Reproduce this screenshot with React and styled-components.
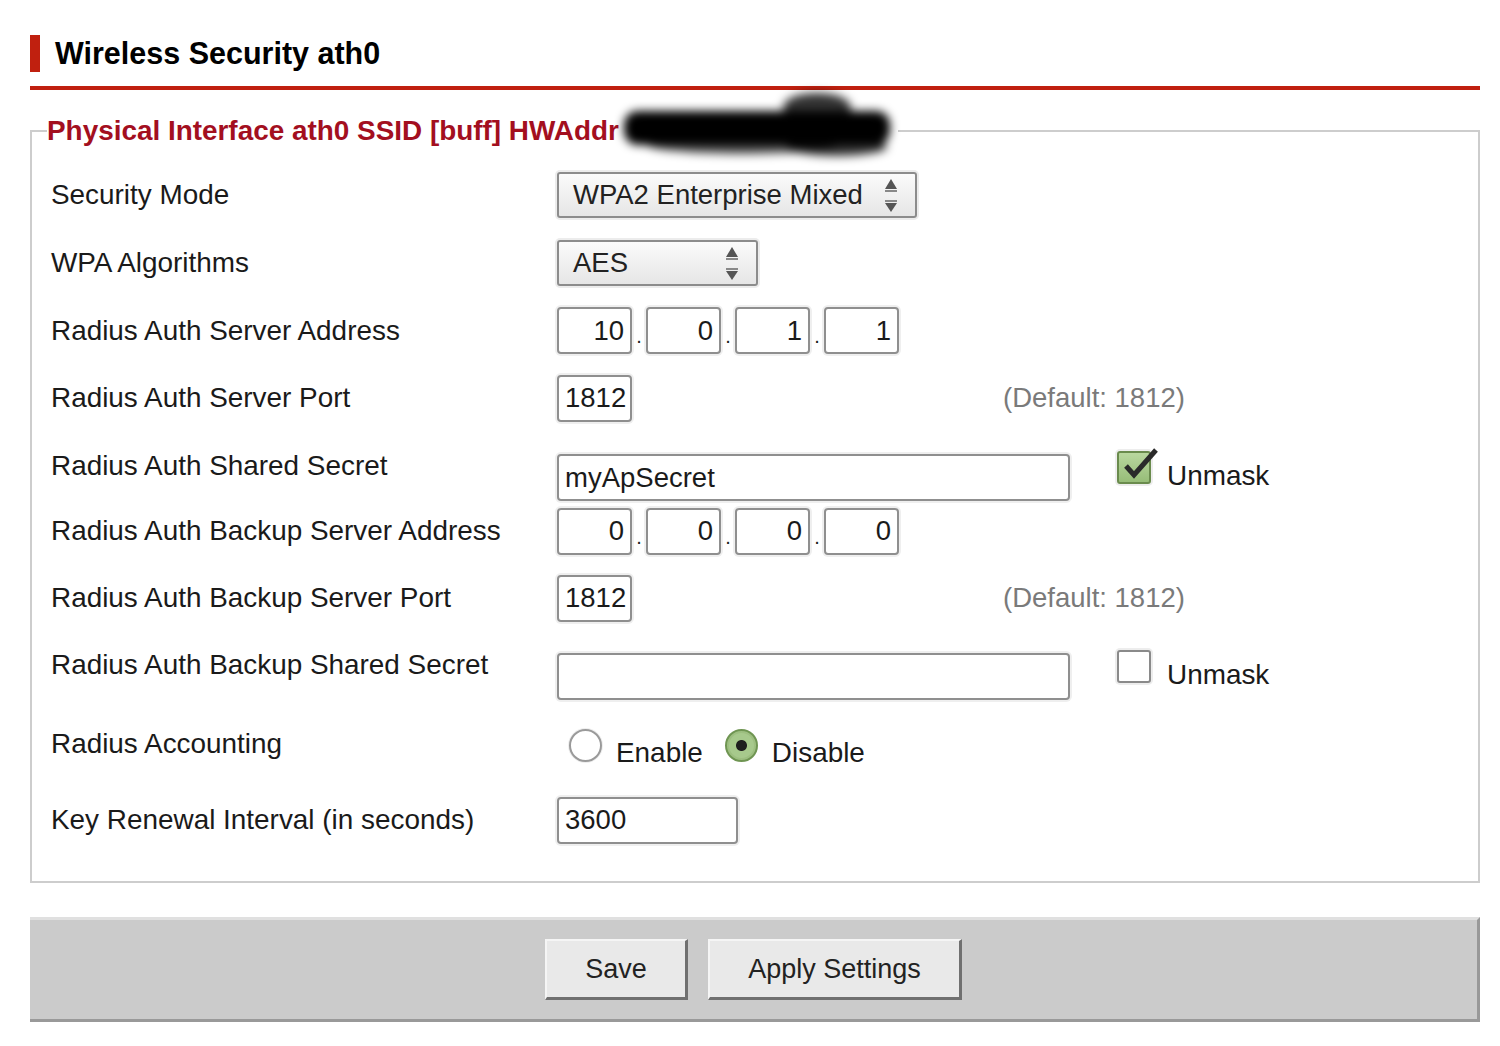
import React from "react";
import styled, { createGlobalStyle } from "styled-components";

const GlobalStyle = createGlobalStyle`
  body {
    margin: 0;
    background: #fff;
    font-family: "Liberation Sans", Arial, sans-serif;
    color: #1a1a1a;
  }
`;

const Page = styled.div`
  width: 1450px;
  padding: 35px 0 0 30px;
`;

const Header = styled.div`
  padding-bottom: 14px;
  border-bottom: 4px solid #c0200f;
`;

const Title = styled.h1`
  margin: 0;
  height: 37px;
  display: flex;
  align-items: center;
  border-left: 10px solid #c0200f;
  padding-left: 15px;
  font-size: 30.5px;
  font-weight: bold;
  color: #000;
`;

const Fieldset = styled.fieldset`
  margin: 25px 0 0;
  padding: 14px 0 27px 19px;
  border: 2px solid #cdcdcd;
  min-width: 0;
`;

const Legend = styled.legend`
  margin-left: -4px;
  padding: 0;
  height: 32px;
  line-height: 32px;
  font-size: 27.9px;
  font-weight: bold;
  color: #a30f1f;
  white-space: nowrap;
`;

const Redaction = styled.svg`
  display: inline-block;
  vertical-align: middle;
  width: 272px;
  height: 32px;
  margin-left: 3px;
  margin-right: 4px;
  overflow: visible;
`;

const Row = styled.div`
  display: flex;
  align-items: ${(p) => (p.$top ? "flex-start" : "center")};
  height: ${(p) => p.$h}px;
  padding-top: ${(p) => p.$pt || 0}px;
  box-sizing: border-box;
`;

const Label = styled.div`
  width: 506px;
  flex: none;
  font-size: 27.9px;
  line-height: 32px;
  margin-bottom: ${(p) => p.$lift || 0}px;
`;

const Control = styled.div`
  display: flex;
  align-items: ${(p) => (p.$top ? "flex-start" : "center")};
  margin-top: ${(p) => p.$mt || 0}px;
`;

const Select = styled.div`
  box-sizing: border-box;
  width: ${(p) => p.$w}px;
  height: 46px;
  display: flex;
  align-items: center;
  justify-content: space-between;
  padding: 0 16px 0 14px;
  border: 2px solid #8c8c8c;
  border-radius: 3px;
  background: linear-gradient(#fbfbfb, #e6e6e6);
  box-shadow: 0 0 0 2px #ececec;
  font-size: 27.5px;
  color: #222;
`;

const Input = styled.div`
  box-sizing: border-box;
  width: ${(p) => p.$w}px;
  height: 47px;
  display: flex;
  align-items: center;
  justify-content: ${(p) => (p.$right ? "flex-end" : "flex-start")};
  padding: 0 6px;
  border: 2px solid #8f8f8f;
  border-radius: 4px;
  background: #fff;
  box-shadow: 0 0 0 2px #efefef;
  font-size: 27.5px;
  color: #1a1a1a;
`;

const Dot = styled.span`
  width: 14px;
  text-align: center;
  font-size: 20px;
  align-self: flex-end;
  padding-bottom: 6px;
`;

const Hint = styled.span`
  margin-left: 371px;
  font-size: 27.5px;
  color: #7a7a7a;
`;

const CheckWrap = styled.div`
  display: flex;
  align-items: flex-start;
  margin-left: 47px;
  margin-top: -3px;
`;

const Box = styled.span`
  display: inline-block;
  position: relative;
  box-sizing: border-box;
  width: 34px;
  height: 33px;
  border: 2px solid ${(p) => (p.$checked ? "#6a8b4d" : "#8a8a8a")};
  border-radius: 3px;
  background: ${(p) =>
    p.$checked ? "linear-gradient(#b9d79f, #97bd78)" : "#fff"};
  box-shadow: 0 0 0 2px #ededed;
`;

const CheckMark = styled.svg`
  position: absolute;
  left: 2px;
  top: -6px;
  width: 38px;
  height: 36px;
  overflow: visible;
`;

const CheckText = styled.span`
  margin-left: 16px;
  margin-top: 9px;
  font-size: 27.9px;
  line-height: 32px;
`;

const RadioGroup = styled.div`
  display: flex;
  align-items: center;
  margin-left: 12px;
`;

const Radio = styled.span`
  display: inline-block;
  box-sizing: border-box;
  width: 33px;
  height: 33px;
  border-radius: 50%;
  margin-top: -8px;
  border: 2px solid ${(p) => (p.$checked ? "#6f9552" : "#9a9a9a")};
  background: ${(p) =>
    p.$checked
      ? "radial-gradient(circle, #1e1e1e 0 5px, #a7c98c 6px 100%)"
      : "#fff"};
  box-shadow: ${(p) =>
    p.$checked ? "inset 0 0 0 2px #9dbf80" : "0 0 0 1px #eeeeee"};
`;

const RadioText = styled.span`
  margin: 8px 22px 0 14px;
  font-size: 27.9px;
`;

const Footer = styled.div`
  margin-top: 34px;
  box-sizing: border-box;
  height: 105px;
  display: flex;
  justify-content: center;
  align-items: center;
  gap: 20px;
  background: #cbcbcb;
  border-top: 3px solid #e0e0e0;
  border-right: 3px solid #999;
  border-bottom: 3px solid #999;
`;

const Button = styled.button`
  box-sizing: border-box;
  width: ${(p) => p.$w}px;
  height: 61px;
  background: #e9e9e9;
  border-style: solid;
  border-width: 2px 3px 3px 2px;
  border-color: #f5f5f5 #707070 #707070 #f5f5f5;
  font-family: "Liberation Sans", Arial, sans-serif;
  font-size: 27px;
  color: #222;
  padding: 0;
`;

const Spinner = () => (
  <svg width="16" height="38" viewBox="0 0 16 38">
    <polygon points="8,3 14,13 2,13" fill="#555" />
    <rect x="2" y="14" width="12" height="2" fill="#888" />
    <rect x="2" y="24" width="12" height="2" fill="#888" />
    <polygon points="2,27 14,27 8,36" fill="#555" />
  </svg>
);

const IpField = ({ parts }) => (
  <Control>
    {parts.map((v, i) => (
      <React.Fragment key={i}>
        {i > 0 && <Dot>.</Dot>}
        <Input $w={75} $right>
          {v}
        </Input>
      </React.Fragment>
    ))}
  </Control>
);

const Check = ({ checked }) => (
  <Box $checked={checked}>
    {checked && (
      <CheckMark viewBox="0 0 38 36">
        <path
          d="M5 19 L13 28 L35 3"
          fill="none"
          stroke="#2a2a2a"
          strokeWidth="5"
          strokeLinejoin="miter"
        />
      </CheckMark>
    )}
  </Box>
);

export default function App() {
  return (
    <>
      <GlobalStyle />
      <Page>
        <Header>
          <Title>Wireless Security ath0</Title>
        </Header>

        <Fieldset>
          <Legend>
            Physical Interface ath0 SSID [buff] HWAddr
            <Redaction viewBox="0 0 272 32">
              <defs>
                <filter id="smudge" x="-20%" y="-80%" width="140%" height="260%">
                  <feGaussianBlur stdDeviation="5" />
                </filter>
              </defs>
              <g filter="url(#smudge)" fill="#000">
                <rect x="2" y="-6" width="266" height="34" rx="14" />
                <ellipse cx="195" cy="-10" rx="34" ry="14" opacity="0.8" />
                <ellipse cx="120" cy="28" rx="95" ry="9" opacity="0.7" />
                <ellipse cx="215" cy="30" rx="50" ry="9" opacity="0.8" />
              </g>
            </Redaction>
          </Legend>

          <Row $h={68}>
            <Label>Security Mode</Label>
            <Select $w={360}>
              WPA2 Enterprise Mixed
              <Spinner />
            </Select>
          </Row>

          <Row $h={68}>
            <Label>WPA Algorithms</Label>
            <Select $w={201}>
              AES
              <Spinner />
            </Select>
          </Row>

          <Row $h={67}>
            <Label>Radius Auth Server Address</Label>
            <IpField parts={["10", "0", "1", "1"]} />
          </Row>

          <Row $h={68}>
            <Label>Radius Auth Server Port</Label>
            <Control>
              <Input $w={75}>1812</Input>
              <Hint>(Default: 1812)</Hint>
            </Control>
          </Row>

          <Row $h={72} $top $pt={18}>
            <Label>Radius Auth Shared Secret</Label>
            <Control $top $mt={4}>
              <Input $w={513}>myApSecret</Input>
              <CheckWrap>
                <Check checked />
                <CheckText>Unmask</CheckText>
              </CheckWrap>
            </Control>
          </Row>

          <Row $h={54}>
            <Label>Radius Auth Backup Server Address</Label>
            <IpField parts={["0", "0", "0", "0"]} />
          </Row>

          <Row $h={80}>
            <Label>Radius Auth Backup Server Port</Label>
            <Control>
              <Input $w={75}>1812</Input>
              <Hint>(Default: 1812)</Hint>
            </Control>
          </Row>

          <Row $h={74} $top $pt={11}>
            <Label>Radius Auth Backup Shared Secret</Label>
            <Control $top $mt={4}>
              <Input $w={513} />
              <CheckWrap>
                <Check />
                <CheckText>Unmask</CheckText>
              </CheckWrap>
            </Control>
          </Row>

          <Row $h={74}>
            <Label $lift={10}>Radius Accounting</Label>
            <RadioGroup>
              <Radio />
              <RadioText>Enable</RadioText>
              <Radio $checked />
              <RadioText>Disable</RadioText>
            </RadioGroup>
          </Row>

          <Row $h={68}>
            <Label>Key Renewal Interval (in seconds)</Label>
            <Input $w={181}>3600</Input>
          </Row>
        </Fieldset>

        <Footer>
          <Button $w={143}>Save</Button>
          <Button $w={254}>Apply Settings</Button>
        </Footer>
      </Page>
    </>
  );
}
